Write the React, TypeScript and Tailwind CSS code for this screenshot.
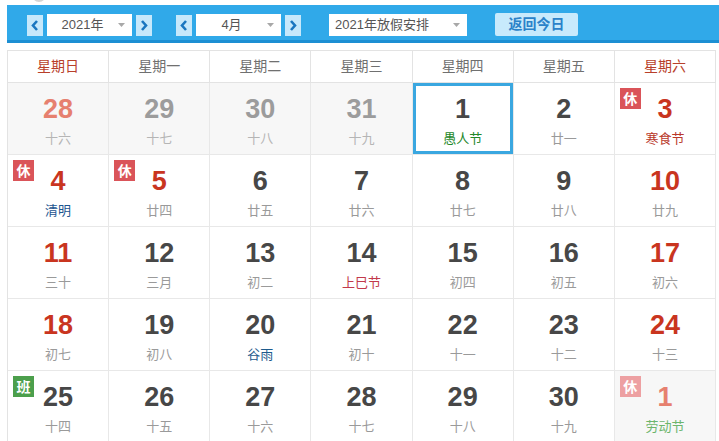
import React from 'react';

type Cell = {
  d: number;
  l: string;
  num: string;
  lunar: string;
  bg?: boolean;
  badge?: 'rest' | 'work' | 'faded';
  selected?: boolean;
};

const DARK = 'text-[#474747]';
const RED = 'text-[#c9351f]';
const GRAY = 'text-[#9c9c9c]';
const PINK = 'text-[#e6806f]';
const LGRAY = 'text-[#9a9a9a]';

const weeks: Cell[][] = [
  [
    { d: 28, l: '十六', num: PINK, lunar: 'text-[#b5b5b5]', bg: true },
    { d: 29, l: '十七', num: GRAY, lunar: 'text-[#b5b5b5]', bg: true },
    { d: 30, l: '十八', num: GRAY, lunar: 'text-[#b5b5b5]', bg: true },
    { d: 31, l: '十九', num: GRAY, lunar: 'text-[#b5b5b5]', bg: true },
    { d: 1, l: '愚人节', num: DARK, lunar: 'text-[#23882a]', selected: true },
    { d: 2, l: '廿一', num: DARK, lunar: LGRAY },
    { d: 3, l: '寒食节', num: RED, lunar: 'text-[#b9382a]', badge: 'rest' },
  ],
  [
    { d: 4, l: '清明', num: RED, lunar: 'text-[#1d5590]', badge: 'rest' },
    { d: 5, l: '廿四', num: RED, lunar: LGRAY, badge: 'rest' },
    { d: 6, l: '廿五', num: DARK, lunar: LGRAY },
    { d: 7, l: '廿六', num: DARK, lunar: LGRAY },
    { d: 8, l: '廿七', num: DARK, lunar: LGRAY },
    { d: 9, l: '廿八', num: DARK, lunar: LGRAY },
    { d: 10, l: '廿九', num: RED, lunar: LGRAY },
  ],
  [
    { d: 11, l: '三十', num: RED, lunar: LGRAY },
    { d: 12, l: '三月', num: DARK, lunar: LGRAY },
    { d: 13, l: '初二', num: DARK, lunar: LGRAY },
    { d: 14, l: '上巳节', num: DARK, lunar: 'text-[#c2394a]' },
    { d: 15, l: '初四', num: DARK, lunar: LGRAY },
    { d: 16, l: '初五', num: DARK, lunar: LGRAY },
    { d: 17, l: '初六', num: RED, lunar: LGRAY },
  ],
  [
    { d: 18, l: '初七', num: RED, lunar: LGRAY },
    { d: 19, l: '初八', num: DARK, lunar: LGRAY },
    { d: 20, l: '谷雨', num: DARK, lunar: 'text-[#1d5a8c]' },
    { d: 21, l: '初十', num: DARK, lunar: LGRAY },
    { d: 22, l: '十一', num: DARK, lunar: LGRAY },
    { d: 23, l: '十二', num: DARK, lunar: LGRAY },
    { d: 24, l: '十三', num: RED, lunar: LGRAY },
  ],
  [
    { d: 25, l: '十四', num: DARK, lunar: LGRAY, badge: 'work' },
    { d: 26, l: '十五', num: DARK, lunar: LGRAY },
    { d: 27, l: '十六', num: DARK, lunar: LGRAY },
    { d: 28, l: '十七', num: DARK, lunar: LGRAY },
    { d: 29, l: '十八', num: DARK, lunar: LGRAY },
    { d: 30, l: '十九', num: DARK, lunar: LGRAY },
    { d: 1, l: '劳动节', num: PINK, lunar: 'text-[#6cb56c]', bg: true, badge: 'faded' },
  ],
];

const weekdays = ['星期日', '星期一', '星期二', '星期三', '星期四', '星期五', '星期六'];

function Arrow({ dir }: { dir: 'l' | 'r' }) {
  return (
    <button className="flex h-[21px] w-[16px] items-center justify-center bg-[#c6e8fb]">
      <svg width="8" height="11" viewBox="0 0 8 11">
        <polyline
          points={dir === 'l' ? '6,1 2,5.5 6,10' : '2,1 6,5.5 2,10'}
          fill="none"
          stroke="#1a76c0"
          strokeWidth="2.6"
        />
      </svg>
    </button>
  );
}

function Caret() {
  return (
    <svg width="7" height="4" viewBox="0 0 7 4" className="mr-[7px] shrink-0">
      <polygon points="0,0 7,0 3.5,4" fill="#a8a8a8" />
    </svg>
  );
}

function Select({ label, width, left }: { label: string; width: string; left?: boolean }) {
  return (
    <div className={`flex h-[22px] items-center bg-white text-[13px] text-[#555] ${width}`}>
      <span className={left ? 'flex-1 pl-[6px] text-left' : 'flex-1 text-center'}>{label}</span>
      <Caret />
    </div>
  );
}

function Badge({ kind }: { kind: 'rest' | 'work' | 'faded' }) {
  const color = kind === 'work' ? 'bg-[#4c9f4c]' : kind === 'faded' ? 'bg-[#eda0a2]' : 'bg-[#da5459]';
  return (
    <span
      className={`absolute left-[5px] top-[5px] flex h-[21px] w-[21px] items-center justify-center text-[14px] font-bold leading-none text-white ${color}`}
    >
      {kind === 'work' ? '班' : '休'}
    </span>
  );
}

export default function App() {
  return (
    <div
      className="relative h-[441px] w-[719px] overflow-hidden bg-white pl-[7px] pt-[5px]"
      style={{ fontFamily: '"Liberation Sans", "Noto Sans CJK SC", sans-serif' }}
    >
      <div className="absolute left-[32px] top-[-12px] h-[14px] w-[14px] rounded-full bg-[#d4d4d4]" />

      {/* toolbar */}
      <div className="flex h-[38px] items-start border-b-[3px] border-[#1d8fd3] bg-[#30a9e9] pl-[20px] pt-[9px]">
        <div className="flex items-center gap-[4px]">
          <Arrow dir="l" />
          <Select label="2021年" width="w-[85px]" />
          <Arrow dir="r" />
        </div>
        <div className="ml-[24px] flex items-center gap-[4px]">
          <Arrow dir="l" />
          <Select label="4月" width="w-[85px]" />
          <Arrow dir="r" />
        </div>
        <div className="ml-[28px]">
          <Select label="2021年放假安排" width="w-[138px]" left />
        </div>
        <button className="ml-[28px] mt-[-1px] flex h-[23px] w-[83px] items-center justify-center rounded-[2px] bg-[#c8eafc] text-[14px] font-bold text-[#2b82c9]">
          返回今日
        </button>
      </div>

      {/* calendar */}
      <div className="mt-[7px] grid w-[709px] grid-cols-7 border-l border-t border-[#e3e3e3]">
        {weekdays.map((w, i) => (
          <div
            key={w}
            className={`flex h-[32px] items-center justify-center border-b border-r border-[#e3e3e3] text-[14px] ${
              i === 0 || i === 6 ? 'text-[#b8402a]' : 'text-[#707070]'
            }`}
          >
            {w}
          </div>
        ))}
        {weeks.flat().map((c, i) => (
          <div
            key={i}
            className={`relative flex h-[72px] flex-col items-center border-b border-r border-[#e8e8e8] pt-[13px] ${
              c.bg ? 'bg-[#f7f7f7]' : 'bg-white'
            }`}
          >
            {c.badge && <Badge kind={c.badge} />}
            <span className={`text-[27px] font-bold leading-[27px] ${c.num}`}>{c.d}</span>
            <span className={`mt-[8px] text-[13px] leading-[16px] ${c.lunar}`}>{c.l}</span>
            {c.selected && (
              <div className="pointer-events-none absolute inset-0 border-[3px] border-[#3aa7e0]" />
            )}
          </div>
        ))}
      </div>
    </div>
  );
}
